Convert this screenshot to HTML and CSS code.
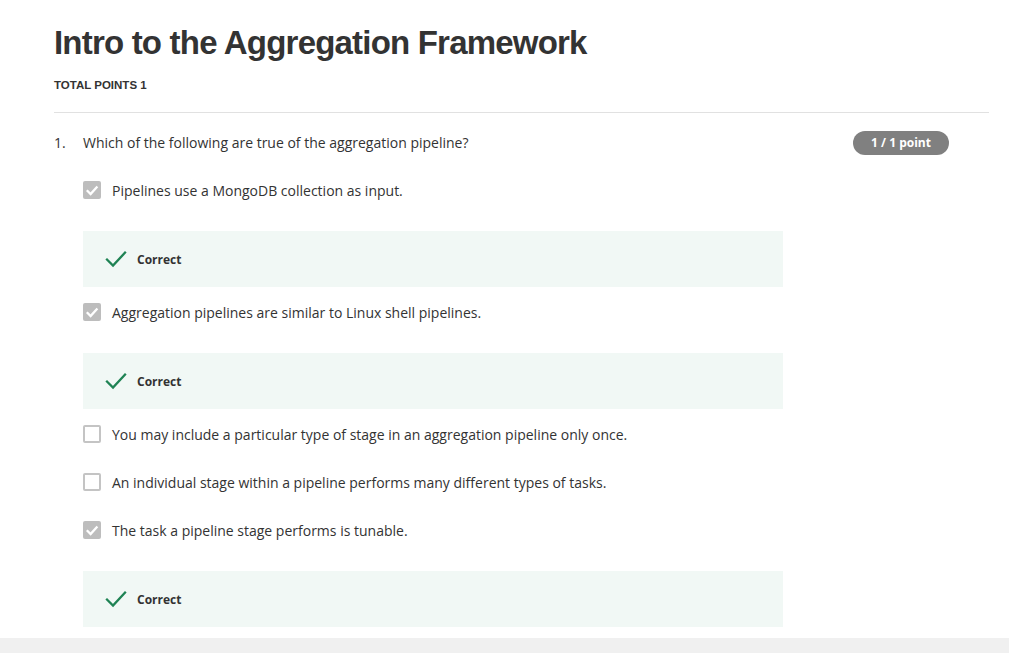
FILE: index.html
```html
<!DOCTYPE html>
<html lang="en">
<head>
<meta charset="utf-8">
<title>Intro to the Aggregation Framework</title>
<link rel="stylesheet" href="styles.css">
</head>
<body>
<main class="page">
  <header class="head">
    <h1 class="title">Intro to the Aggregation Framework</h1>
    <div class="total">TOTAL POINTS 1</div>
  </header>
  <section class="question">
    <div class="q-row">
      <span class="q-num">1.</span>
      <span class="q-text">Which of the following are true of the aggregation pipeline?</span>
      <span class="badge">1 / 1 point</span>
    </div>
    <div class="options">
      <div class="opt">
        <span class="box checked"><svg viewBox="0 0 18 18" width="18" height="18"><path d="M3.8 9.3 L7.6 13 L14.4 5.4" fill="none" stroke="#fff" stroke-width="2.3"/></svg></span>
        <span class="opt-text">Pipelines use a MongoDB collection as input.</span>
      </div>
      <div class="feedback">
        <svg class="tick" viewBox="0 0 22 18" width="22" height="18"><path d="M1.2 8.8 L8 15.5 L20.8 1.8" fill="none" stroke="#1f8354" stroke-width="2.3"/></svg>
        <span class="fb-text">Correct</span>
      </div>
      <div class="opt">
        <span class="box checked"><svg viewBox="0 0 18 18" width="18" height="18"><path d="M3.8 9.3 L7.6 13 L14.4 5.4" fill="none" stroke="#fff" stroke-width="2.3"/></svg></span>
        <span class="opt-text">Aggregation pipelines are similar to Linux shell pipelines.</span>
      </div>
      <div class="feedback">
        <svg class="tick" viewBox="0 0 22 18" width="22" height="18"><path d="M1.2 8.8 L8 15.5 L20.8 1.8" fill="none" stroke="#1f8354" stroke-width="2.3"/></svg>
        <span class="fb-text">Correct</span>
      </div>
      <div class="opt">
        <span class="box"></span>
        <span class="opt-text">You may include a particular type of stage in an aggregation pipeline only once.</span>
      </div>
      <div class="opt">
        <span class="box"></span>
        <span class="opt-text">An individual stage within a pipeline performs many different types of tasks.</span>
      </div>
      <div class="opt">
        <span class="box checked"><svg viewBox="0 0 18 18" width="18" height="18"><path d="M3.8 9.3 L7.6 13 L14.4 5.4" fill="none" stroke="#fff" stroke-width="2.3"/></svg></span>
        <span class="opt-text">The task a pipeline stage performs is tunable.</span>
      </div>
      <div class="feedback">
        <svg class="tick" viewBox="0 0 22 18" width="22" height="18"><path d="M1.2 8.8 L8 15.5 L20.8 1.8" fill="none" stroke="#1f8354" stroke-width="2.3"/></svg>
        <span class="fb-text">Correct</span>
      </div>
    </div>
  </section>
</main>
<div class="band"></div>
</body>
</html>
```

FILE: styles.css
```css
html, body {
  margin: 0;
  padding: 0;
  background: #fff;
}
body {
  font-family: "Open Sans", "Liberation Sans", sans-serif;
  color: #333;
  overflow: hidden;
}
.page {
  padding: 22px 20px 0 54px;
}
.head {
  border-bottom: 1px solid #e1e1e1;
  padding-bottom: 20px;
}
.title {
  margin: 0;
  font-family: "Liberation Sans", Arial, sans-serif;
  font-weight: 700;
  font-size: 33px;
  line-height: 42px;
  letter-spacing: -0.8px;
  color: #333;
}
.total {
  margin-top: 14px;
  font-family: "Liberation Sans", Arial, sans-serif;
  font-weight: 700;
  font-size: 11.5px;
  line-height: 14px;
  color: #333;
}
.question {
  padding-top: 5px;
}
.q-row {
  display: flex;
  align-items: center;
  height: 48px;
  width: 895px;
  font-size: 14px;
}
.q-num {
  width: 29px;
  flex: none;
}
.q-text {
  flex: 1;
}
.badge {
  flex: none;
  width: 96px;
  height: 24px;
  margin-top: 2px;
  border-radius: 12px;
  background: #808080;
  color: #fff;
  font-weight: 700;
  font-size: 12px;
  line-height: 24px;
  text-align: center;
}
.options {
  padding-left: 29px;
}
.opt {
  display: flex;
  align-items: center;
  height: 48px;
  font-size: 14px;
}
.box {
  flex: none;
  box-sizing: border-box;
  width: 18px;
  height: 18px;
  border: 2px solid #c4c4c4;
  border-radius: 2px;
  margin-right: 11px;
  background: #fff;
}
.box.checked {
  border: none;
  background: #bdbdbd;
}
.box svg {
  display: block;
}
.feedback {
  display: flex;
  align-items: center;
  width: 700px;
  height: 56px;
  margin: 17px 0 1px;
  background: #f1f8f5;
  box-sizing: border-box;
  padding-left: 22px;
}
.tick {
  display: block;
  margin-right: 10px;
}
.fb-text {
  font-weight: 700;
  font-size: 12px;
  color: #333;
}
.band {
  margin-top: 11px;
  height: 40px;
  background: #f0f0f0;
}
```
